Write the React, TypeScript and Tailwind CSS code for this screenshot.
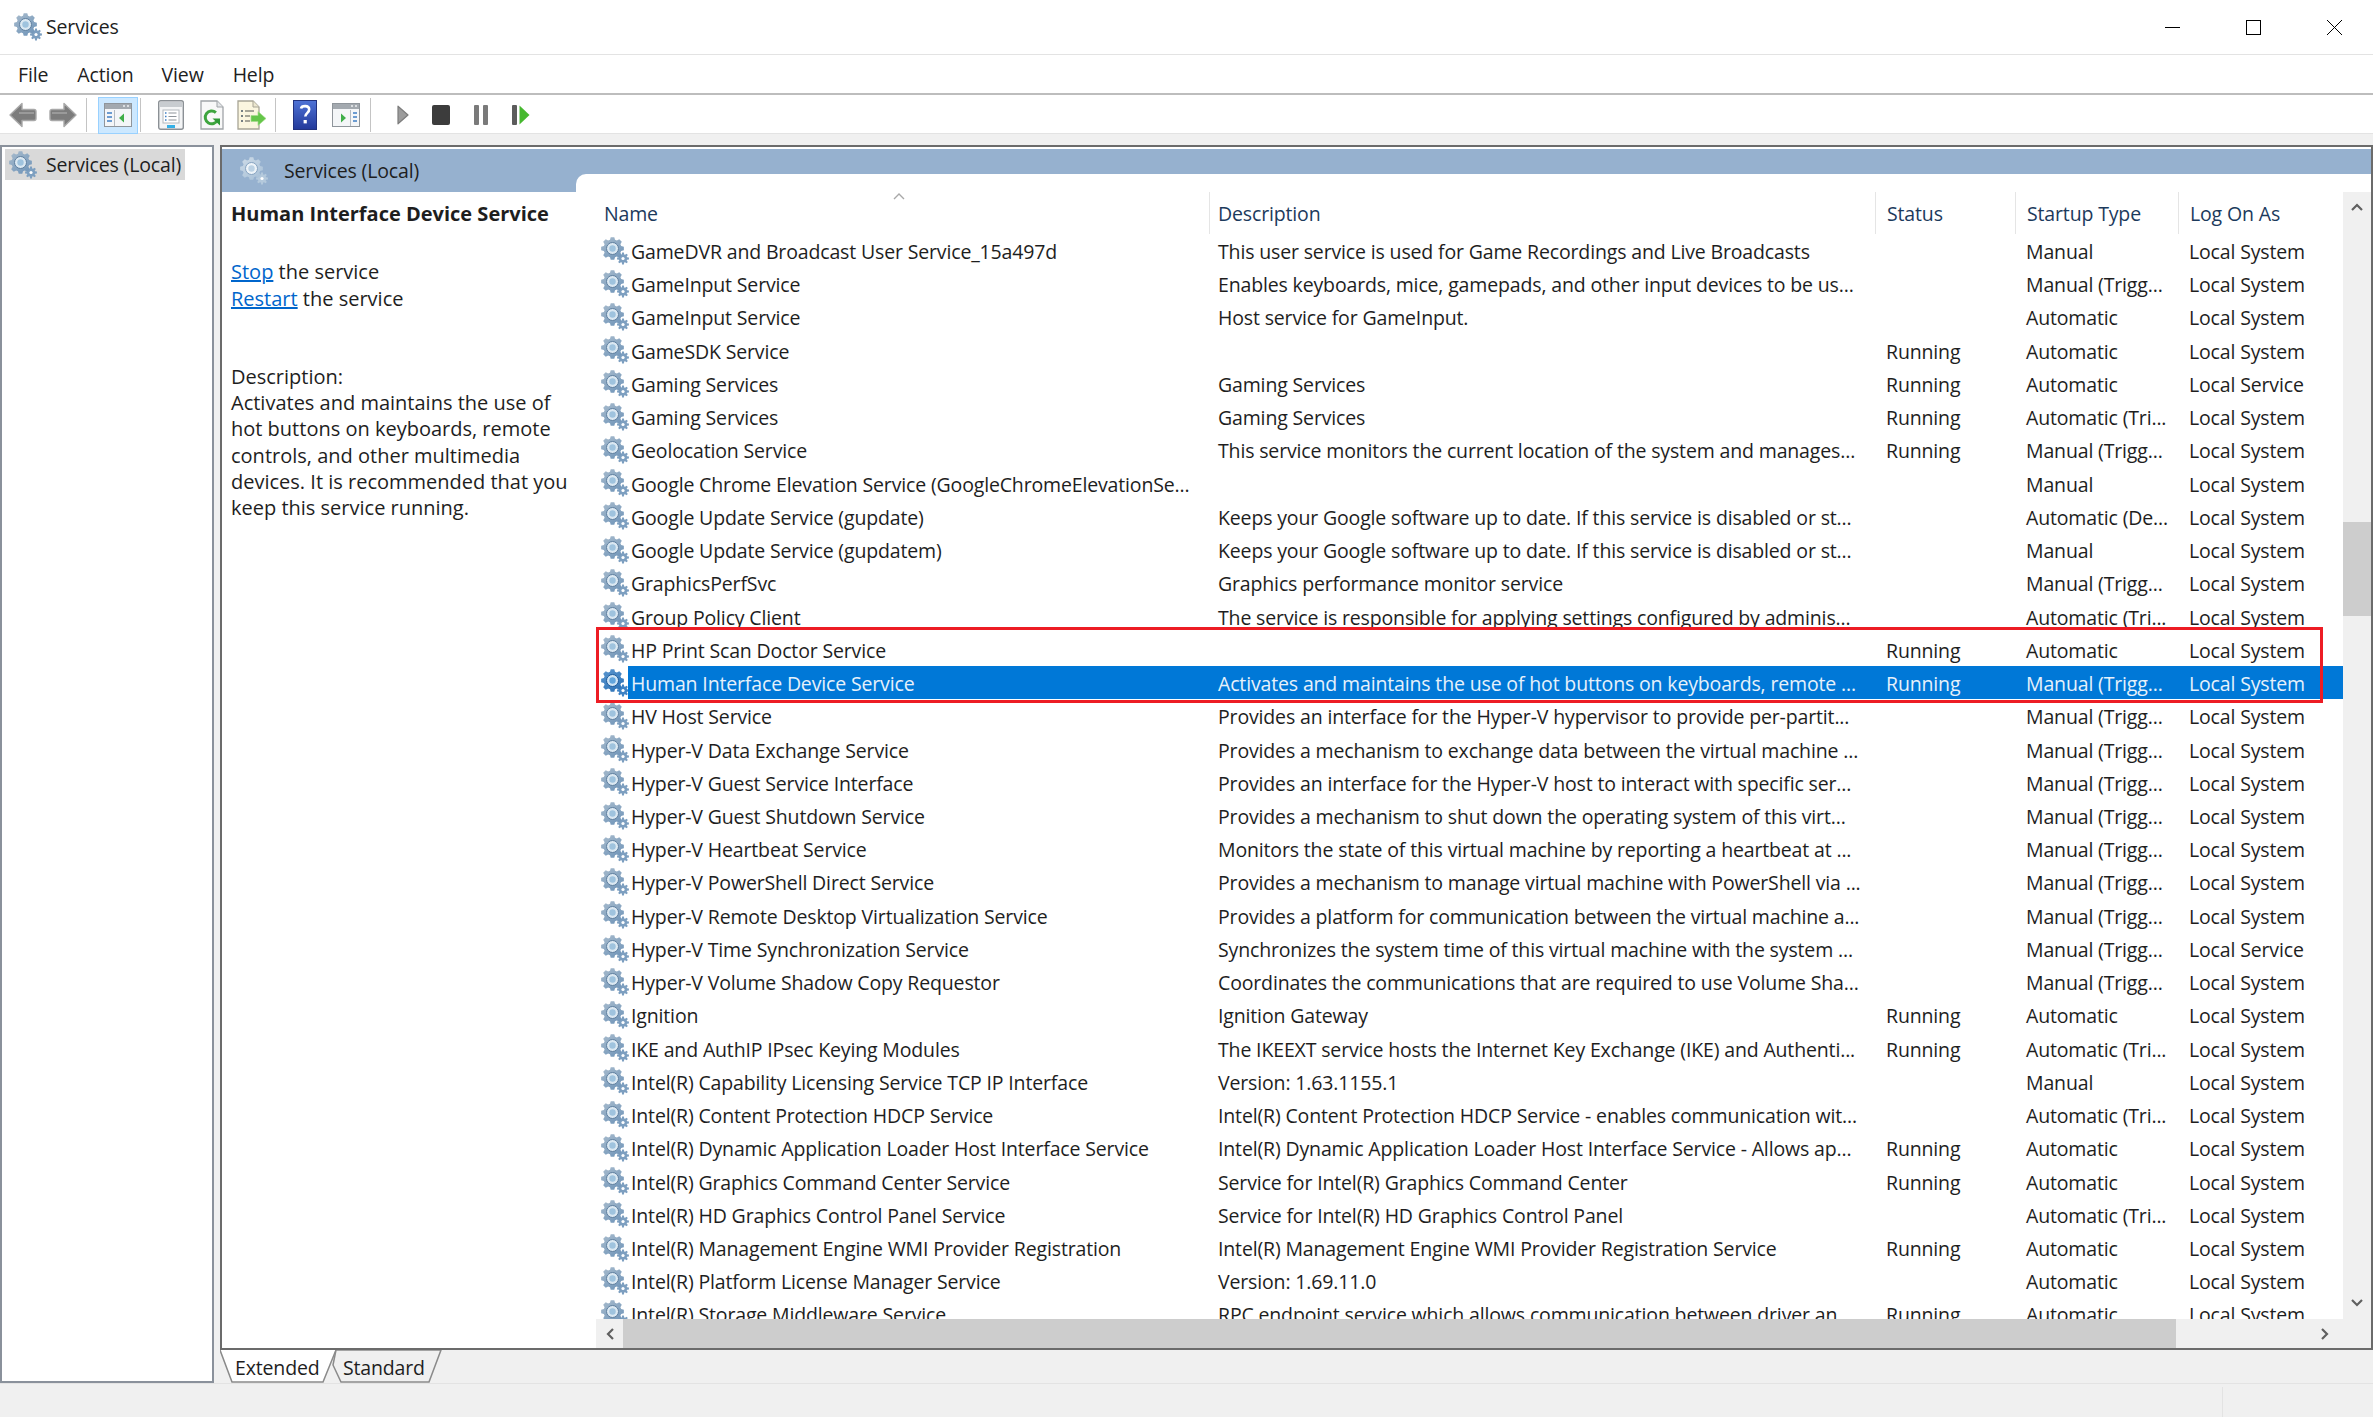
import React, { useId } from 'react';

type Row = [string, string, string, string, string];

const MT = 'Manual (Trigg...';
const AT = 'Automatic (Tri...';
const LS = 'Local System';

const rows: Row[] = [
  ['GameDVR and Broadcast User Service_15a497d', 'This user service is used for Game Recordings and Live Broadcasts', '', 'Manual', LS],
  ['GameInput Service', 'Enables keyboards, mice, gamepads, and other input devices to be us...', '', MT, LS],
  ['GameInput Service', 'Host service for GameInput.', '', 'Automatic', LS],
  ['GameSDK Service', '', 'Running', 'Automatic', LS],
  ['Gaming Services', 'Gaming Services', 'Running', 'Automatic', 'Local Service'],
  ['Gaming Services', 'Gaming Services', 'Running', AT, LS],
  ['Geolocation Service', 'This service monitors the current location of the system and manages...', 'Running', MT, LS],
  ['Google Chrome Elevation Service (GoogleChromeElevationSe...', '', '', 'Manual', LS],
  ['Google Update Service (gupdate)', 'Keeps your Google software up to date. If this service is disabled or st...', '', 'Automatic (De...', LS],
  ['Google Update Service (gupdatem)', 'Keeps your Google software up to date. If this service is disabled or st...', '', 'Manual', LS],
  ['GraphicsPerfSvc', 'Graphics performance monitor service', '', MT, LS],
  ['Group Policy Client', 'The service is responsible for applying settings configured by adminis...', '', AT, LS],
  ['HP Print Scan Doctor Service', '', 'Running', 'Automatic', LS],
  ['Human Interface Device Service', 'Activates and maintains the use of hot buttons on keyboards, remote ...', 'Running', MT, LS],
  ['HV Host Service', 'Provides an interface for the Hyper-V hypervisor to provide per-partit...', '', MT, LS],
  ['Hyper-V Data Exchange Service', 'Provides a mechanism to exchange data between the virtual machine ...', '', MT, LS],
  ['Hyper-V Guest Service Interface', 'Provides an interface for the Hyper-V host to interact with specific ser...', '', MT, LS],
  ['Hyper-V Guest Shutdown Service', 'Provides a mechanism to shut down the operating system of this virt...', '', MT, LS],
  ['Hyper-V Heartbeat Service', 'Monitors the state of this virtual machine by reporting a heartbeat at ...', '', MT, LS],
  ['Hyper-V PowerShell Direct Service', 'Provides a mechanism to manage virtual machine with PowerShell via ...', '', MT, LS],
  ['Hyper-V Remote Desktop Virtualization Service', 'Provides a platform for communication between the virtual machine a...', '', MT, LS],
  ['Hyper-V Time Synchronization Service', 'Synchronizes the system time of this virtual machine with the system ...', '', MT, 'Local Service'],
  ['Hyper-V Volume Shadow Copy Requestor', 'Coordinates the communications that are required to use Volume Sha...', '', MT, LS],
  ['Ignition', 'Ignition Gateway', 'Running', 'Automatic', LS],
  ['IKE and AuthIP IPsec Keying Modules', 'The IKEEXT service hosts the Internet Key Exchange (IKE) and Authenti...', 'Running', AT, LS],
  ['Intel(R) Capability Licensing Service TCP IP Interface', 'Version: 1.63.1155.1', '', 'Manual', LS],
  ['Intel(R) Content Protection HDCP Service', 'Intel(R) Content Protection HDCP Service - enables communication wit...', '', AT, LS],
  ['Intel(R) Dynamic Application Loader Host Interface Service', 'Intel(R) Dynamic Application Loader Host Interface Service - Allows ap...', 'Running', 'Automatic', LS],
  ['Intel(R) Graphics Command Center Service', 'Service for Intel(R) Graphics Command Center', 'Running', 'Automatic', LS],
  ['Intel(R) HD Graphics Control Panel Service', 'Service for Intel(R) HD Graphics Control Panel', '', AT, LS],
  ['Intel(R) Management Engine WMI Provider Registration', 'Intel(R) Management Engine WMI Provider Registration Service', 'Running', 'Automatic', LS],
  ['Intel(R) Platform License Manager Service', 'Version: 1.69.11.0', '', 'Automatic', LS],
  ['Intel(R) Storage Middleware Service', 'RPC endpoint service which allows communication between driver an...', 'Running', 'Automatic', LS],
];

const SELECTED = 13;

// teeth outline for the gears, worked out once
function gearPath(cx: number, cy: number, ro: number, ri: number, teeth: number) {
  let d = '';
  const step = (Math.PI * 2) / teeth;
  for (let i = 0; i < teeth; i++) {
    const a = i * step;
    const pts: [number, number][] = [
      [ri, a - step * 0.36],
      [ro, a - step * 0.2],
      [ro, a + step * 0.2],
      [ri, a + step * 0.36],
    ];
    pts.forEach(([r, t], j) => {
      const x = (cx + r * Math.cos(t)).toFixed(2);
      const y = (cy + r * Math.sin(t)).toFixed(2);
      d += `${i === 0 && j === 0 ? 'M' : 'L'}${x} ${y}`;
    });
  }
  return d + 'Z';
}

const bigGear = gearPath(11.5, 11.5, 11.5, 9, 8);
const smallGear = gearPath(22, 21.5, 6, 4.2, 8);

const tones = {
  normal: { a: '#a9bccd', b: '#7397ba', ring: '#5f7f9f', hole: '#dbe8f2', core: '#9fc3de', small: '#7d9fc0' },
  dark: { a: '#5c97cf', b: '#2f74b8', ring: '#1d5a9a', hole: '#cfe4f5', core: '#63a5dc', small: '#3f83c4' },
  pale: { a: '#cfdcE8', b: '#aac2d8', ring: '#86a3c0', hole: '#eef4f9', core: '#bcd2e4', small: '#b4c9dc' },
};

const Gear: React.FC<{ className?: string; tone?: keyof typeof tones }> = ({ className, tone = 'normal' }) => {
  const id = useId();
  const c = tones[tone];
  return (
    <svg viewBox="0 0 28 28" className={className}>
      <defs>
        <linearGradient id={id} x1="0" y1="0" x2="0.7" y2="1">
          <stop offset="0" stopColor={c.a} />
          <stop offset="1" stopColor={c.b} />
        </linearGradient>
      </defs>
      <path d={smallGear} fill={c.small} />
      <circle cx="22" cy="21.5" r="1.6" fill="#fff" />
      <path d={bigGear} fill={`url(#${id})`} />
      <circle cx="11.5" cy="11.5" r="6" fill={c.hole} stroke={c.ring} strokeWidth="1" />
      <circle cx="11.5" cy="11.5" r="3.2" fill={c.core} />
    </svg>
  );
};

const Sep: React.FC<{ className: string }> = ({ className }) => (
  <div className={`w-px h-[34px] bg-[#c4c4c4] ${className}`} />
);

const Arrow: React.FC<{ flip?: boolean; className: string }> = ({ flip, className }) => (
  <svg viewBox="0 0 28 28" className={`h-[28px] w-[28px] ${className}`}>
    <path
      d={flip ? 'M27 14 15 2.5V8.5H3a2 2 0 0 0-2 2v7a2 2 0 0 0 2 2h12v6Z' : 'M1 14 13 2.5V8.5H25a2 2 0 0 1 2 2v7a2 2 0 0 1-2 2H13v6Z'}
      fill="#7c7c7c"
      stroke="#a8a8a8"
      strokeWidth="1.4"
      strokeLinejoin="round"
    />
    <path d={flip ? 'M3 12H18' : 'M10 12H25'} stroke="#9a9a9a" strokeWidth="2" />
  </svg>
);

const PaneIcon: React.FC<{ right?: boolean; className: string }> = ({ right, className }) => (
  <svg viewBox="0 0 28 26" className={`h-[26px] w-[28px] ${className}`}>
    <rect x="0.5" y="1.5" width="27" height="23" fill="#f4f6f8" stroke="#8f959b" />
    <rect x="1" y="2" width="26" height="5" fill="#a3a9af" />
    <path d="M19 4h2M23 4h2" stroke="#eef0f2" strokeWidth="1.5" />
    <path d={right ? 'M18.5 8v16' : 'M10.5 8v16'} stroke="#b5bbc1" />
    {right ? (
      <>
        <path d="M9 11.5v9l5-4.5Z" fill="#3fae49" />
        <path d="M21 11h4M21 15h4M21 19h4" stroke="#3f7fc4" strokeWidth="1.6" />
      </>
    ) : (
      <>
        <path d="M3 11h5M3 15h5M3 19h5" stroke="#3f7fc4" strokeWidth="1.6" />
        <path d="M20 11.5v9l-5-4.5Z" fill="#3fae49" />
      </>
    )}
  </svg>
);

const Toolbar: React.FC = () => (
  <div className="h-[38px] bg-white flex items-center pt-[2px]">
    <Arrow className="ml-[9px]" />
    <Arrow flip className="ml-[12px]" />
    <Sep className="ml-[9px]" />
    <div className="ml-[11px] w-[40px] h-[37px] bg-[#cce8ff] border border-[#99d1ff] flex items-center justify-center">
      <PaneIcon className="" />
    </div>
    <Sep className="ml-[2px]" />
    <svg viewBox="0 0 26 30" className="ml-[17px] h-[30px] w-[26px]">
      <rect x="0.7" y="0.7" width="24.6" height="28.6" rx="2" fill="#f4f5f6" stroke="#8b9095" strokeWidth="1.4" />
      <rect x="2" y="2" width="22" height="5" fill="#c8ccd0" />
      <rect x="5" y="10" width="16" height="13" fill="#fff" stroke="#b4b9be" />
      <path d="M7 13h1.5M7 16.5h1.5M7 20h1.5" stroke="#3f7fc4" strokeWidth="1.4" />
      <path d="M10.5 13h8M10.5 16.5h8M10.5 20h8" stroke="#8d9399" strokeWidth="1.2" />
      <rect x="9" y="25" width="8" height="3" fill="#35b0e6" />
    </svg>
    <svg viewBox="0 0 24 30" className="ml-[16px] h-[30px] w-[24px]">
      <path d="M1 1h16l6 6v22H1Z" fill="#f8f8f8" stroke="#a0a4a8" strokeWidth="1.3" />
      <path d="M17 1v6h6" fill="#e4e6e8" stroke="#a0a4a8" />
      <path d="M17.5 20a6.4 6.4 0 1 1-1.6-7.4" fill="none" stroke="#3ea53e" strokeWidth="3" />
      <path d="M12.5 18.5h7.5v7Z" fill="#2f9a36" />
    </svg>
    <svg viewBox="0 0 30 30" className="ml-[13px] h-[30px] w-[30px]">
      <path d="M1 1h15l6 6v22H1Z" fill="#fbf6df" stroke="#a8a596" strokeWidth="1.3" />
      <path d="M16 1v6h6" fill="#ece7cf" stroke="#a8a596" />
      <path d="M4 11h2M4 16h2M4 21h2" stroke="#4a5866" strokeWidth="1.5" />
      <path d="M8 11h9M8 16h5M8 21h5" stroke="#8a8a80" strokeWidth="1.4" />
      <path d="M14 15.5h7v-4l8 7-8 7v-4h-7Z" fill="#65c64a" stroke="#a5db8d" strokeWidth="0.7" />
    </svg>
    <Sep className="ml-[8px]" />
    <svg viewBox="0 0 24 30" className="ml-[17px] h-[30px] w-[24px]">
      <defs>
        <linearGradient id="helpBg" x1="0" y1="0" x2="0" y2="1">
          <stop offset="0" stopColor="#4f73d6" />
          <stop offset="1" stopColor="#23399a" />
        </linearGradient>
      </defs>
      <rect x="0.5" y="0.5" width="23" height="29" fill="url(#helpBg)" stroke="#22327f" />
      <path d="M8 8.5c.6-3 8-3.6 8.2.8.1 3.6-3.7 3.5-3.9 7.2" fill="none" stroke="#fff" strokeWidth="2.6" />
      <rect x="10.6" y="20" width="3.2" height="3.4" fill="#fff" />
    </svg>
    <PaneIcon right className="ml-[15px]" />
    <Sep className="ml-[10px]" />
    <svg viewBox="0 0 12 20" className="ml-[26px] h-[20px] w-[12px]">
      <path d="M1 1.2 11 10 1 18.8Z" fill="#9c9c9c" stroke="#7c7c7c" strokeWidth="1.2" strokeLinejoin="round" />
    </svg>
    <div className="ml-[23px] w-[18px] h-[20px] bg-[#3c3c3c] rounded-[2px]" />
    <div className="ml-[24px] w-[14px] h-[20px] flex justify-between">
      <div className="w-[5px] bg-[#7a7a7a] rounded-[1px]" />
      <div className="w-[5px] bg-[#7a7a7a] rounded-[1px]" />
    </div>
    <div className="ml-[24px] flex items-center gap-[2px]">
      <div className="w-[5px] h-[20px] bg-[#5c5c5c] rounded-[1px]" />
      <svg viewBox="0 0 11 20" className="h-[20px] w-[11px]">
        <path d="M0.5 0.5 10.5 10 0.5 19.5Z" fill="#46b82f" />
      </svg>
    </div>
  </div>
);

const Chevron: React.FC<{ d: string; className: string }> = ({ d, className }) => (
  <svg viewBox="0 0 14 14" className={className}>
    <path d={d} fill="none" stroke="#606060" strokeWidth="2.2" />
  </svg>
);

const TableRow: React.FC<{ row: Row; selected: boolean }> = ({ row, selected }) => (
  <div className="flex h-[33.24px] shrink-0 items-center">
    <div className="w-[32px] pl-[5px] shrink-0">
      <Gear className="h-[28px] w-[28px]" tone={selected ? 'dark' : 'normal'} />
    </div>
    <div
      className={`flex-1 h-full grid grid-cols-[584px_666px_140px_163px_161px] items-center whitespace-nowrap pt-[2px] ${
        selected ? 'bg-[#0078d7] text-[#e6f1fb]' : ''
      }`}
    >
      <div className="pl-[3px] overflow-hidden">{row[0]}</div>
      <div className="pl-[6px] overflow-hidden">{row[1]}</div>
      <div className="pl-[8px]">{row[2]}</div>
      <div className="pl-[8px]">{row[3]}</div>
      <div className="pl-[8px]">{row[4]}</div>
    </div>
  </div>
);

const HeaderCell: React.FC<{ className: string; label: string }> = ({ className, label }) => (
  <div className={`h-full flex items-center border-r border-[#e5e5e5] text-[#1c3a5c] pt-[2px] ${className}`}>{label}</div>
);

const App: React.FC = () => {
  return (
    <div className="relative w-[2373px] h-[1417px] overflow-hidden bg-[#f0f0f0] text-[19.5px] text-[#1e1e1e] font-['Open_Sans',sans-serif] tracking-[-0.15px]">
      {/* title bar */}
      <div className="h-[55px] bg-white border-b border-[#e3e3e3] flex items-center pl-[14px]">
        <Gear className="h-[28px] w-[28px]" tone="normal" />
        <span className="ml-[4px]">Services</span>
        <div className="ml-auto flex items-center pr-[31px]">
          <div className="w-[15px] h-px bg-black" />
          <div className="ml-[66px] w-[15px] h-[15px] border border-black" />
          <svg viewBox="0 0 15 15" className="ml-[66px] w-[15px] h-[15px]">
            <path d="M0 0 15 15M15 0 0 15" stroke="#000" strokeWidth="1" />
          </svg>
        </div>
      </div>

      {/* menu */}
      <div className="h-[40px] bg-white border-b-2 border-[#bdbdbd] flex items-center pt-[2px]">
        <span className="ml-[18px]">File</span>
        <span className="ml-[29px]">Action</span>
        <span className="ml-[28px]">View</span>
        <span className="ml-[29px]">Help</span>
      </div>

      <Toolbar />
      <div className="h-[12px] border-t border-[#e3e3e3]" />

      {/* main */}
      <div className="flex h-[1238px]">
        <div className="w-[214px] bg-white border-2 border-[#8a919b] pt-[2px] pl-[3px]">
          <div className="w-[180px] h-[31px] bg-[#d9d9d9] flex items-center pl-[4px] pt-[1px] whitespace-nowrap">
            <Gear className="h-[28px] w-[28px] shrink-0" tone="normal" />
            <span className="ml-[9px]">Services (Local)</span>
          </div>
        </div>

        <div className="ml-[6px] flex-1 flex flex-col">
          <div className="h-[1205px] bg-white border-2 border-[#6b6b6b] flex flex-col pt-[2px]">
            {/* blue header with the notch */}
            <div className="flex h-[43px] shrink-0">
              <div className="w-[354px] bg-[#96b1cf] flex items-center pl-[18px]">
                <Gear className="h-[28px] w-[28px]" tone="pale" />
                <span className="ml-[16px]">Services (Local)</span>
              </div>
              <div className="flex-1 bg-[#96b1cf] pt-[25px]">
                <div className="h-[18px] bg-white rounded-tl-[10px]" />
              </div>
            </div>

            <div className="flex-1 flex min-h-0">
              {/* extended description */}
              <div className="w-[374px] shrink-0 pl-[9px] pt-[9px] text-[20px] tracking-normal leading-[26.3px]">
                <div className="font-bold">Human Interface Device Service</div>
                <div className="mt-[32px]">
                  <span className="text-[#0066cc] underline">Stop</span> the service
                </div>
                <div>
                  <span className="text-[#0066cc] underline">Restart</span> the service
                </div>
                <div className="mt-[52px]">Description:</div>
                <div>Activates and maintains the use of</div>
                <div>hot buttons on keyboards, remote</div>
                <div>controls, and other multimedia</div>
                <div>devices. It is recommended that you</div>
                <div>keep this service running.</div>
              </div>

              {/* list */}
              <div className="flex-1 flex flex-col min-w-0">
                <div className="flex-1 flex min-h-0">
                  <div className="flex-1 flex flex-col overflow-hidden">
                    <div className="relative flex h-[42px] shrink-0">
                      <HeaderCell className="w-[614px] pl-[8px]" label="Name" />
                      <HeaderCell className="w-[666px] pl-[8px]" label="Description" />
                      <HeaderCell className="w-[140px] pl-[11px]" label="Status" />
                      <HeaderCell className="w-[163px] pl-[11px]" label="Startup Type" />
                      <div className="flex items-center pl-[11px] pt-[2px] text-[#1c3a5c]">Log On As</div>
                      <svg viewBox="0 0 12 7" className="absolute left-[297px] top-[1px] w-[12px] h-[7px]">
                        <path d="M1 6 6 1l5 5" fill="none" stroke="#a8a8a8" strokeWidth="1.4" />
                      </svg>
                    </div>
                    {rows.map((row, i) => (
                      <TableRow key={i} row={row} selected={i === SELECTED} />
                    ))}
                  </div>

                  {/* vertical scrollbar */}
                  <div className="w-[28px] shrink-0 bg-[#f0f0f0] flex flex-col items-center">
                    <Chevron d="M2 10 7 5l5 5" className="w-[14px] h-[14px] mt-[8px]" />
                    <div className="w-full h-[94px] mt-[308px] bg-[#cdcdcd]" />
                    <Chevron d="M2 4l5 5 5-5" className="w-[14px] h-[14px] mt-[680px]" />
                  </div>
                </div>

                {/* horizontal scrollbar */}
                <div className="h-[29px] shrink-0 bg-[#f0f0f0] flex items-center">
                  <div className="w-[27px] flex justify-center">
                    <Chevron d="M10 2 5 7l5 5" className="w-[14px] h-[14px]" />
                  </div>
                  <div className="w-[1553px] h-full bg-[#cdcdcd]" />
                  <Chevron d="M4 2l5 5-5 5" className="w-[14px] h-[14px] ml-[142px]" />
                </div>
              </div>
            </div>
          </div>

          {/* tabs */}
          <div className="h-[33px] flex">
            <div className="relative w-[116px] h-[33px]">
              <svg viewBox="0 0 116 33" className="absolute inset-0 w-[116px] h-[33px]">
                <path d="M0 0 12 32H103L116 0" fill="#fff" stroke="#8a8a8a" strokeWidth="1.5" />
              </svg>
              <span className="absolute left-[15px] top-[3px]">Extended</span>
            </div>
            <div className="relative -ml-[4px] w-[110px] h-[33px]">
              <svg viewBox="0 0 110 33" className="absolute inset-0 w-[110px] h-[33px]">
                <path d="M4 0H109L97 32H9L1 15Z" fill="#f0f0f0" stroke="#8a8a8a" strokeWidth="1.5" />
              </svg>
              <span className="absolute left-[11px] top-[3px]">Standard</span>
            </div>
          </div>
        </div>
      </div>

      {/* status bar */}
      <div className="h-[34px] border-t border-[#e3e3e3] flex justify-end">
        <div className="w-[151px] border-l border-[#e3e3e3] mt-[3px]" />
      </div>

      {/* red highlight drawn over the list */}
      <div className="absolute left-[596px] top-[627px] w-[1727px] h-[76px] border-[3px] border-[#ed1c24] pointer-events-none" />
    </div>
  );
};

export default App;
